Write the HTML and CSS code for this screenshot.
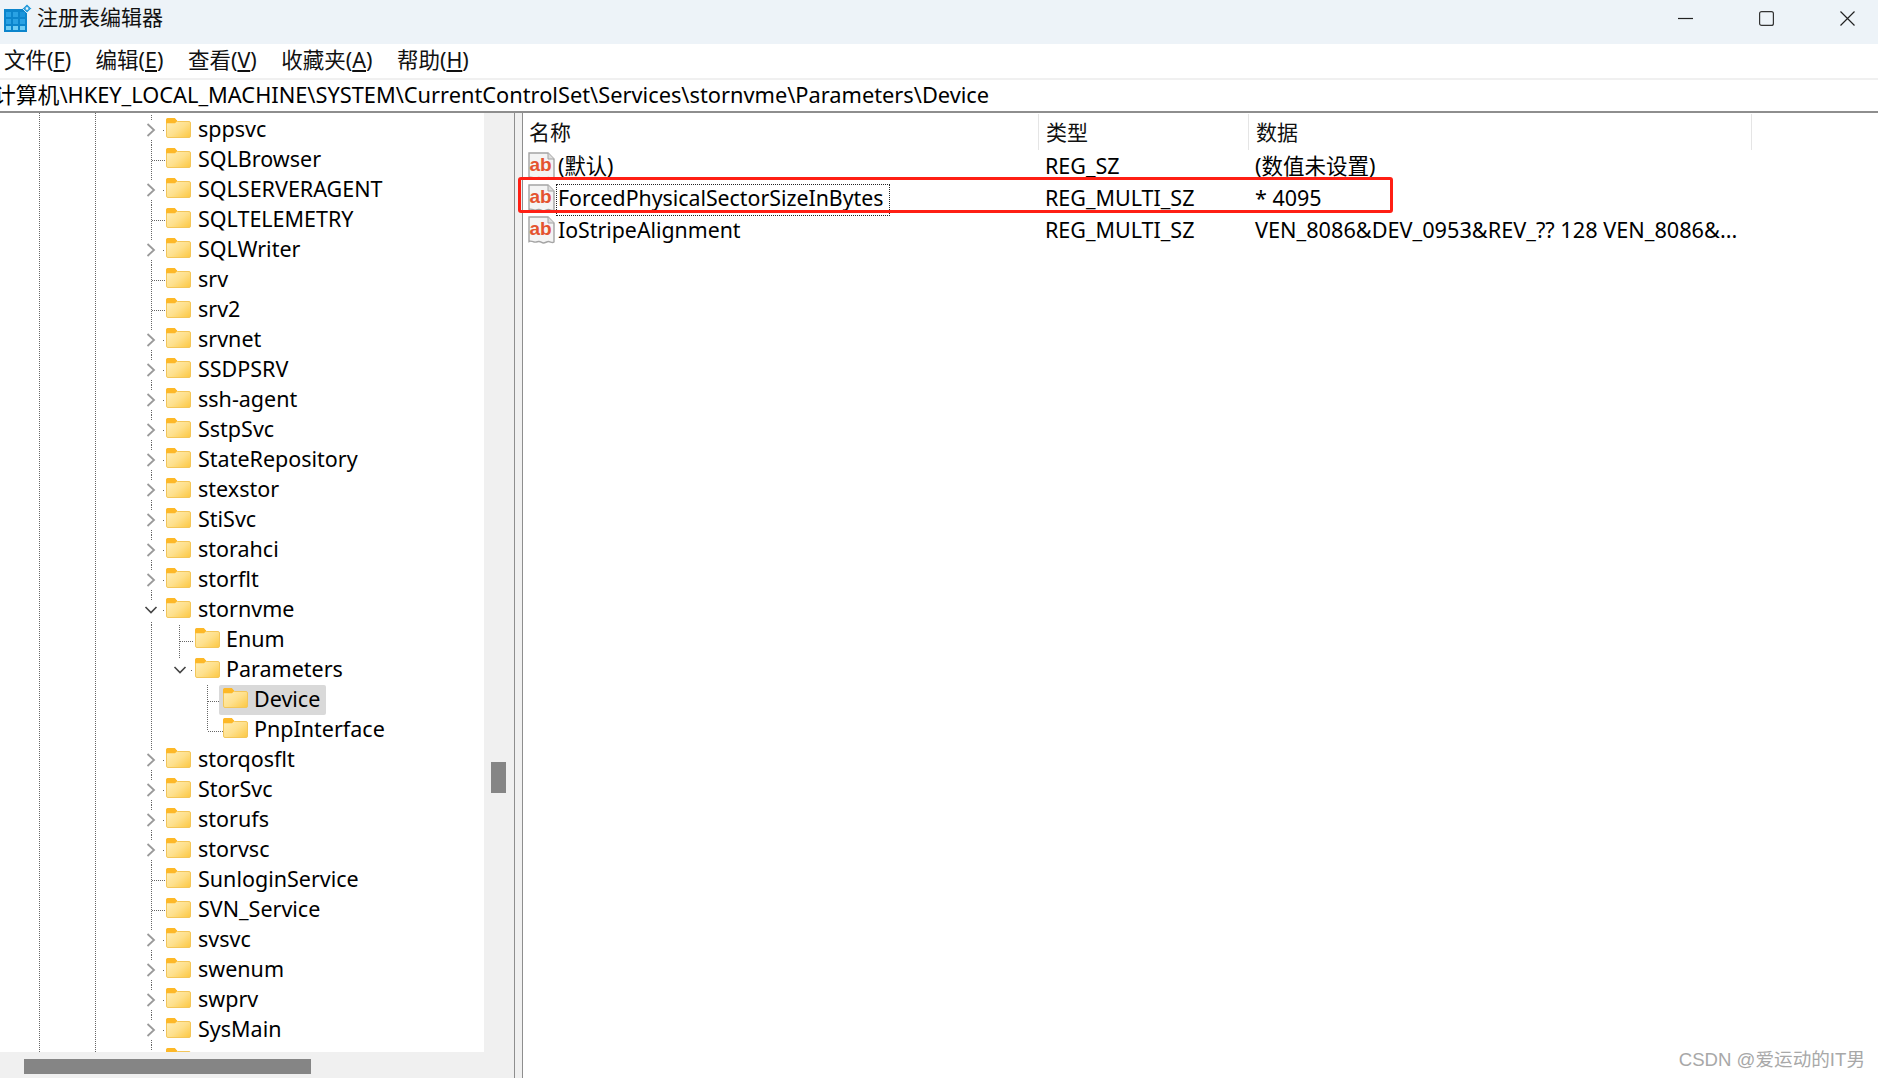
FILE: index.html
```html
<!DOCTYPE html>
<html lang="zh-CN">
<head>
<meta charset="utf-8">
<title>注册表编辑器</title>
<link rel="stylesheet" href="styles.css">
</head>
<body>
<svg class="defs" width="0" height="0" aria-hidden="true">
  <defs>
    <linearGradient id="fg" x1="0" y1="0" x2="1" y2="1">
      <stop offset="0" stop-color="#fff0bd"/>
      <stop offset="0.55" stop-color="#fee08c"/>
      <stop offset="1" stop-color="#fcc740"/>
    </linearGradient>
    <symbol id="folder" viewBox="0 0 25 20">
      <path d="M0.5 2a1.5 1.5 0 0 1 1.5-1.5h6.5l3 3h11.5a1.5 1.5 0 0 1 1.5 1.500v13a1.5 1.5 0 0 1-1.5 1.500h-21a1.5 1.5 0 0 1-1.5-1.500z" fill="url(#fg)" stroke="#f3c65a" stroke-width="1"/>
      <path d="M0 2a2 2 0 0 1 2-2h6.800l2.600 3.100-2.400 2.200h-9z" fill="#fdb827"/>
    </symbol>
    <symbol id="right" viewBox="0 0 10 14">
      <path d="M1.500 1l6.500 6-6.500 6" fill="none" stroke="#9a9a9a" stroke-width="1.800"/>
    </symbol>
    <symbol id="down" viewBox="0 0 14 10">
      <path d="M1.500 2l5.500 5.500 5.500-5.500" fill="none" stroke="#444" stroke-width="1.600"/>
    </symbol>
    <symbol id="sz" viewBox="0 0 27 28">
      <path d="M1 1h19l6 6v19c-2 1.500-3.500-.5-5.500-.5s-3 1.500-5 1.500-3-2-5-1.500-3 1-4.500.5-3-1.500-5-.5z" fill="#f4f4f4" stroke="#a4a4a4" stroke-width="1.400"/>
      <path d="M20 1v6h6" fill="#dedede" stroke="#a4a4a4"/>
      <text x="1.500" y="18.500" class="abtext">ab</text>
    </symbol>
  </defs>
</svg>

<div class="window">
  <header class="titlebar">
    <svg class="appicon" width="28" height="30" viewBox="0 0 28 30" aria-hidden="true">
      <rect x="0" y="5" width="23" height="23" fill="#0c85cc"/>
      <g fill="#2aa2e4">
        <rect x="2" y="8" width="5" height="5"/><rect x="9" y="8" width="5" height="5"/>
        <rect x="2" y="15" width="5" height="5"/><rect x="9" y="15" width="5" height="5"/><rect x="16" y="15" width="5" height="5"/>
      </g>
      <g fill="#6fcdf5">
        <rect x="2" y="22" width="5" height="4"/><rect x="9" y="22" width="5" height="4"/><rect x="16" y="22" width="5" height="4"/>
      </g>
      <rect x="16" y="8" width="5" height="5" fill="#1a94da"/>
      <path d="M23 0l4.500 4.500-4.500 4.500-4.500-4.500z" fill="#2e9edb" stroke="#cfe9f8"/>
      <rect x="21.800" y="3.300" width="2.400" height="2.400" fill="#e8f6fd"/>
    </svg>
    <span class="apptitle">注册表编辑器</span>
    <div class="controls">
      <svg width="15" height="15" viewBox="0 0 15 15" aria-hidden="true"><path d="M0 7.500h15" stroke="#222" stroke-width="1.200"/></svg>
      <svg width="15" height="15" viewBox="0 0 15 15" aria-hidden="true"><rect x="0.600" y="0.600" width="13.800" height="13.800" rx="2" fill="none" stroke="#333" stroke-width="1.200"/></svg>
      <svg width="15" height="15" viewBox="0 0 15 15" aria-hidden="true"><path d="M0.500 0.500l14 14M14.500 0.500l-14 14" stroke="#222" stroke-width="1.200"/></svg>
    </div>
  </header>

  <nav class="menubar">
    <span class="menu">文件(<u>F</u>)</span>
    <span class="menu">编辑(<u>E</u>)</span>
    <span class="menu">查看(<u>V</u>)</span>
    <span class="menu">收藏夹(<u>A</u>)</span>
    <span class="menu">帮助(<u>H</u>)</span>
  </nav>

  <div class="address"><span class="path">计算机\HKEY_LOCAL_MACHINE\SYSTEM\CurrentControlSet\Services\stornvme\Parameters\Device</span></div>

  <main class="main">
    <section class="treepane">
      <div class="tree">
        <div class="row d1 branch"><svg class="chev"><use href="#right"/></svg><span class="node"><svg class="folder"><use href="#folder"/></svg><span class="label">sppsvc</span></span></div>
        <div class="row d1 leaf"><span class="twist"></span><span class="node"><svg class="folder"><use href="#folder"/></svg><span class="label">SQLBrowser</span></span></div>
        <div class="row d1 branch"><svg class="chev"><use href="#right"/></svg><span class="node"><svg class="folder"><use href="#folder"/></svg><span class="label">SQLSERVERAGENT</span></span></div>
        <div class="row d1 leaf"><span class="twist"></span><span class="node"><svg class="folder"><use href="#folder"/></svg><span class="label">SQLTELEMETRY</span></span></div>
        <div class="row d1 branch"><svg class="chev"><use href="#right"/></svg><span class="node"><svg class="folder"><use href="#folder"/></svg><span class="label">SQLWriter</span></span></div>
        <div class="row d1 leaf"><span class="twist"></span><span class="node"><svg class="folder"><use href="#folder"/></svg><span class="label">srv</span></span></div>
        <div class="row d1 leaf"><span class="twist"></span><span class="node"><svg class="folder"><use href="#folder"/></svg><span class="label">srv2</span></span></div>
        <div class="row d1 branch"><svg class="chev"><use href="#right"/></svg><span class="node"><svg class="folder"><use href="#folder"/></svg><span class="label">srvnet</span></span></div>
        <div class="row d1 branch"><svg class="chev"><use href="#right"/></svg><span class="node"><svg class="folder"><use href="#folder"/></svg><span class="label">SSDPSRV</span></span></div>
        <div class="row d1 branch"><svg class="chev"><use href="#right"/></svg><span class="node"><svg class="folder"><use href="#folder"/></svg><span class="label">ssh-agent</span></span></div>
        <div class="row d1 branch"><svg class="chev"><use href="#right"/></svg><span class="node"><svg class="folder"><use href="#folder"/></svg><span class="label">SstpSvc</span></span></div>
        <div class="row d1 branch"><svg class="chev"><use href="#right"/></svg><span class="node"><svg class="folder"><use href="#folder"/></svg><span class="label">StateRepository</span></span></div>
        <div class="row d1 branch"><svg class="chev"><use href="#right"/></svg><span class="node"><svg class="folder"><use href="#folder"/></svg><span class="label">stexstor</span></span></div>
        <div class="row d1 branch"><svg class="chev"><use href="#right"/></svg><span class="node"><svg class="folder"><use href="#folder"/></svg><span class="label">StiSvc</span></span></div>
        <div class="row d1 branch"><svg class="chev"><use href="#right"/></svg><span class="node"><svg class="folder"><use href="#folder"/></svg><span class="label">storahci</span></span></div>
        <div class="row d1 branch"><svg class="chev"><use href="#right"/></svg><span class="node"><svg class="folder"><use href="#folder"/></svg><span class="label">storflt</span></span></div>
        <div class="row d1 open"><svg class="chev-down"><use href="#down"/></svg><span class="node"><svg class="folder"><use href="#folder"/></svg><span class="label">stornvme</span></span></div>
        <div class="row d2 leaf2"><span class="twist"></span><span class="node"><svg class="folder"><use href="#folder"/></svg><span class="label">Enum</span></span></div>
        <div class="row d2 open2"><svg class="chev-down"><use href="#down"/></svg><span class="node"><svg class="folder"><use href="#folder"/></svg><span class="label">Parameters</span></span></div>
        <div class="row d3 leaf3"><span class="twist"></span><span class="node selected"><svg class="folder"><use href="#folder"/></svg><span class="label">Device</span></span></div>
        <div class="row d3 last3"><span class="twist"></span><span class="node"><svg class="folder"><use href="#folder"/></svg><span class="label">PnpInterface</span></span></div>
        <div class="row d1 branch"><svg class="chev"><use href="#right"/></svg><span class="node"><svg class="folder"><use href="#folder"/></svg><span class="label">storqosflt</span></span></div>
        <div class="row d1 branch"><svg class="chev"><use href="#right"/></svg><span class="node"><svg class="folder"><use href="#folder"/></svg><span class="label">StorSvc</span></span></div>
        <div class="row d1 branch"><svg class="chev"><use href="#right"/></svg><span class="node"><svg class="folder"><use href="#folder"/></svg><span class="label">storufs</span></span></div>
        <div class="row d1 branch"><svg class="chev"><use href="#right"/></svg><span class="node"><svg class="folder"><use href="#folder"/></svg><span class="label">storvsc</span></span></div>
        <div class="row d1 leaf"><span class="twist"></span><span class="node"><svg class="folder"><use href="#folder"/></svg><span class="label">SunloginService</span></span></div>
        <div class="row d1 leaf"><span class="twist"></span><span class="node"><svg class="folder"><use href="#folder"/></svg><span class="label">SVN_Service</span></span></div>
        <div class="row d1 branch"><svg class="chev"><use href="#right"/></svg><span class="node"><svg class="folder"><use href="#folder"/></svg><span class="label">svsvc</span></span></div>
        <div class="row d1 branch"><svg class="chev"><use href="#right"/></svg><span class="node"><svg class="folder"><use href="#folder"/></svg><span class="label">swenum</span></span></div>
        <div class="row d1 branch"><svg class="chev"><use href="#right"/></svg><span class="node"><svg class="folder"><use href="#folder"/></svg><span class="label">swprv</span></span></div>
        <div class="row d1 branch"><svg class="chev"><use href="#right"/></svg><span class="node"><svg class="folder"><use href="#folder"/></svg><span class="label">SysMain</span></span></div>
        <div class="row d1 branch"><svg class="chev"><use href="#right"/></svg><span class="node"><svg class="folder"><use href="#folder"/></svg><span class="label cut">SystemEventsBroker</span></span></div>
      </div>
      <div class="vscroll"><div class="vthumb"></div></div>
      <div class="hscroll"><div class="hthumb"></div></div>
    </section>

    <div class="splitter"></div>

    <section class="listpane">
      <div class="lhead">
        <div class="hcell">名称</div>
        <div class="hcell">类型</div>
        <div class="hcell">数据</div>
      </div>
      <div class="lrow">
        <div class="cname"><svg class="szicon"><use href="#sz"/></svg><span class="vname">(默认)</span></div>
        <div class="cell">REG_SZ</div>
        <div class="cell">(数值未设置)</div>
      </div>
      <div class="lrow">
        <div class="cname"><svg class="szicon"><use href="#sz"/></svg><span class="vname focus">ForcedPhysicalSectorSizeInBytes</span></div>
        <div class="cell">REG_MULTI_SZ</div>
        <div class="cell">* 4095</div>
      </div>
      <div class="lrow">
        <div class="cname"><svg class="szicon"><use href="#sz"/></svg><span class="vname">IoStripeAlignment</span></div>
        <div class="cell">REG_MULTI_SZ</div>
        <div class="cell data">VEN_8086&amp;DEV_0953&amp;REV_?? 128 VEN_8086&amp;...</div>
      </div>
      <div class="redbox"></div>
    </section>
  </main>

  <div class="watermark">CSDN @爱运动的IT男</div>
</div>
</body>
</html>
```

FILE: styles.css
```css
* { box-sizing: border-box; }
html, body { margin: 0; padding: 0; height: 100%; overflow: hidden; background: #fff; }
body { font-family: "Noto Sans", "Noto Sans CJK SC", sans-serif; color: #000; }
.defs { position: absolute; }
.abtext { font-family: "Liberation Sans", sans-serif; font-weight: 700; font-size: 19px; fill: #e4532f; }

.window { position: relative; width: 1878px; height: 1078px; display: flex; flex-direction: column; }

.titlebar { flex: 0 0 44px; background: #edf3f8; display: flex; align-items: flex-start; padding-left: 4px; }
.appicon { margin-top: 4px; }
.apptitle { margin-left: 5px; margin-top: 1px; font: 21px/30px "Noto Sans CJK SC", sans-serif; color: #111; }
.controls { margin-left: auto; display: flex; padding-top: 11px; padding-right: 23px; gap: 66px; }
.controls svg { display: block; }

.menubar { flex: 0 0 34px; display: flex; align-items: center; padding: 0 0 2px 4px; font: 21.500px/30px "Noto Sans", "Noto Sans CJK SC", sans-serif; color: #111; }
.menu { white-space: nowrap; margin-right: 24.500px; }

.address { flex: 0 0 35px; border-top: 2px solid #f0f0f0; border-bottom: 2px solid #8e8e8e; overflow: hidden; white-space: nowrap; font-size: 21.800px; line-height: 30px; }
.path { display: block; margin-left: -6px; }

.main { flex: 1; display: flex; min-height: 0; }

.treepane { width: 514px; display: grid; grid-template-columns: 484px 30px; grid-template-rows: 1fr 26px; background: #f0f0f0; }
.tree {
  overflow: hidden;
  background-color: #fff;
  padding-top: 2px;
  background-image:
    repeating-linear-gradient(to bottom, #666 0 1px, transparent 1px 2px),
    repeating-linear-gradient(to bottom, #666 0 1px, transparent 1px 2px);
  background-size: 1px 100%, 1px 100%;
  background-position: 39px 0, 95px 0;
  background-repeat: no-repeat;
}
.row {
  --dv: repeating-linear-gradient(to bottom, #666 0 1px, transparent 1px 2px);
  --dh: repeating-linear-gradient(to right, #666 0 1px, transparent 1px 2px);
  height: 30px; display: flex; align-items: center; white-space: nowrap;
  background-repeat: no-repeat;
}
.d1 { padding-left: 141px; }
.d2 { padding-left: 170px; }
.d3 { padding-left: 198px; }
.chev { width: 10px; height: 14px; margin-left: 5px; margin-right: 10px; flex: none; }
.chev-down { width: 14px; height: 10px; margin-left: 3px; margin-right: 8px; flex: none; }
.twist { width: 25px; flex: none; }
.node { display: flex; align-items: center; height: 30px; }
.folder { width: 25px; height: 20px; flex: none; margin-top: -4px; }
.label { margin-left: 7px; margin-top: -2px; font-size: 21.500px; line-height: 30px; color: #000; }
.d2 .label, .d3 .label { margin-left: 6px; }
.label.cut { margin-top: 0; }
.selected { background: #d9d9d9; border-radius: 2px; margin-left: -4px; padding: 0 6px 0 4px; }

.branch {
  background-image: var(--dv), var(--dv), var(--dh);
  background-size: 1px 5px, 1px 5px, 1px 1px;
  background-position: 151px 0, 151px 25px, 163px 15px;
}
.leaf {
  background-image: var(--dv), var(--dh);
  background-size: 1px 30px, 13px 1px;
  background-position: 151px 0, 152px 15px;
}
.open {
  background-image: var(--dv), var(--dv), var(--dh);
  background-size: 1px 5px, 1px 3px, 1px 1px;
  background-position: 151px 0, 151px 27px, 163px 15px;
}
.leaf2 {
  background-image: var(--dv), var(--dv), var(--dh);
  background-size: 1px 30px, 1px 30px, 13px 1px;
  background-position: 151px 0, 179px 0, 180px 16px;
}
.open2 {
  background-image: var(--dv), var(--dv), var(--dh);
  background-size: 1px 30px, 1px 3px, 1px 1px;
  background-position: 151px 0, 179px 0, 191px 15px;
}
.leaf3 {
  background-image: var(--dv), var(--dv), var(--dh);
  background-size: 1px 30px, 1px 30px, 12px 1px;
  background-position: 151px 0, 207px 0, 208px 16px;
}
.last3 {
  background-image: var(--dv), var(--dv), var(--dh);
  background-size: 1px 30px, 1px 16px, 15px 1px;
  background-position: 151px 0, 207px 0, 208px 16px;
}

.vscroll { background: #f0f0f0; padding: 649px 0 0 7px; overflow: hidden; }
.vthumb { width: 15px; height: 31px; background: #858585; }
.hscroll { grid-column: 1 / 3; background: #f0f0f0; padding: 7px 0 0 24px; }
.hthumb { width: 287px; height: 15px; background: #858585; }

.splitter { width: 9px; background: #f0f0f0; border-left: 1px solid #8e8e8e; border-right: 1px solid #8e8e8e; }

.listpane { position: relative; flex: 1; background: #fff; }
.lhead, .lrow { display: grid; grid-template-columns: 516px 210px 503px 1fr; }
.lhead { height: 37px; padding-top: 1px; }
.hcell { border-right: 1px solid #e5e5e5; padding-left: 7px; font: 21px/35px "Noto Sans CJK SC", sans-serif; color: #111; }
.hcell:nth-child(1) { padding-left: 6px; }
.lrow { height: 32px; font-size: 21.500px; line-height: 32px; }
.cname { display: flex; align-items: flex-start; padding-left: 5px; padding-top: 2px; min-width: 0; white-space: nowrap; }
.szicon { width: 27px; height: 28px; flex: none; }
.vname { margin-left: 1px; padding: 0 7px 0 2px; height: 32px; font-size: 21.300px; line-height: 28px; }
.focus { outline: 1px dotted #222; outline-offset: -1px; }
.cell { padding-left: 6px; white-space: nowrap; }
.data { font-size: 21.700px; }

.redbox { position: absolute; left: -5px; top: 64px; width: 875px; height: 36px; border: 3px solid #ff1f14; border-radius: 3px; }

.watermark { position: absolute; right: 13px; top: 1048px; font: 18.600px/24px "Liberation Sans", "Noto Sans CJK SC", sans-serif; color: #a8a8a8; white-space: nowrap; }
```
